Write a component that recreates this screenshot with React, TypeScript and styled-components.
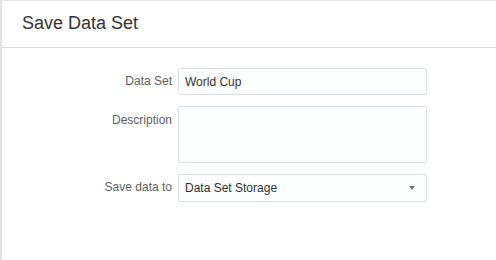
import styled, { createGlobalStyle } from 'styled-components';

const GlobalStyle = createGlobalStyle`
  html, body {
    margin: 0;
    padding: 0;
    background: #ffffff;
  }
  * {
    box-sizing: border-box;
  }
`;

const Dialog = styled.div`
  width: 496px;
  height: 260px;
  background: #ffffff;
  border-top: 1px solid #e2e2e2;
  border-left: 2px solid #e4e4e4;
  font-family: 'Liberation Sans', Arial, sans-serif;
  overflow: hidden;
`;

const Header = styled.div`
  height: 47px;
  border-bottom: 1px solid #d9d9d9;
  display: flex;
  align-items: center;
  padding: 0 0 2px 20px;
`;

const Title = styled.h1`
  margin: 0;
  font-size: 18px;
  font-weight: normal;
  color: #333333;
`;

const Form = styled.div`
  display: grid;
  grid-template-columns: 170px 249px;
  column-gap: 6px;
  row-gap: 11px;
  padding-top: 20px;
`;

const Label = styled.label<{ $top?: boolean }>`
  font-size: 12px;
  color: #5e5e5e;
  text-align: right;
  line-height: ${({ $top }) => ($top ? '16px' : '27px')};
  padding-top: ${({ $top }) => ($top ? '6px' : '0')};
`;

const fieldBase = `
  width: 100%;
  border: 1px solid #dce0e5;
  border-radius: 2px;
  background: #fcfdfe;
  font-family: 'Liberation Sans', Arial, sans-serif;
  font-size: 12px;
  color: #333333;
  outline: none;
`;

const TextInput = styled.input`
  ${fieldBase}
  height: 27px;
  padding: 0 6px;
`;

const TextArea = styled.textarea`
  ${fieldBase}
  height: 57px;
  padding: 6px;
  resize: none;
  display: block;
`;

const SelectBox = styled.div`
  ${fieldBase}
  height: 28px;
  padding: 0 6px;
  display: flex;
  align-items: center;
  justify-content: space-between;
`;

const Caret = styled.span`
  width: 0;
  height: 0;
  margin-right: 5px;
  border-left: 3.5px solid transparent;
  border-right: 3.5px solid transparent;
  border-top: 4px solid #757575;
`;

const App = () => {
  return (
    <>
      <GlobalStyle />
      <Dialog>
        <Header>
          <Title>Save Data Set</Title>
        </Header>
        <Form>
          <Label>Data Set</Label>
          <TextInput defaultValue="World Cup" />
          <Label $top>Description</Label>
          <TextArea />
          <Label>Save data to</Label>
          <SelectBox>
            <span>Data Set Storage</span>
            <Caret />
          </SelectBox>
        </Form>
      </Dialog>
    </>
  );
};

export default App;
